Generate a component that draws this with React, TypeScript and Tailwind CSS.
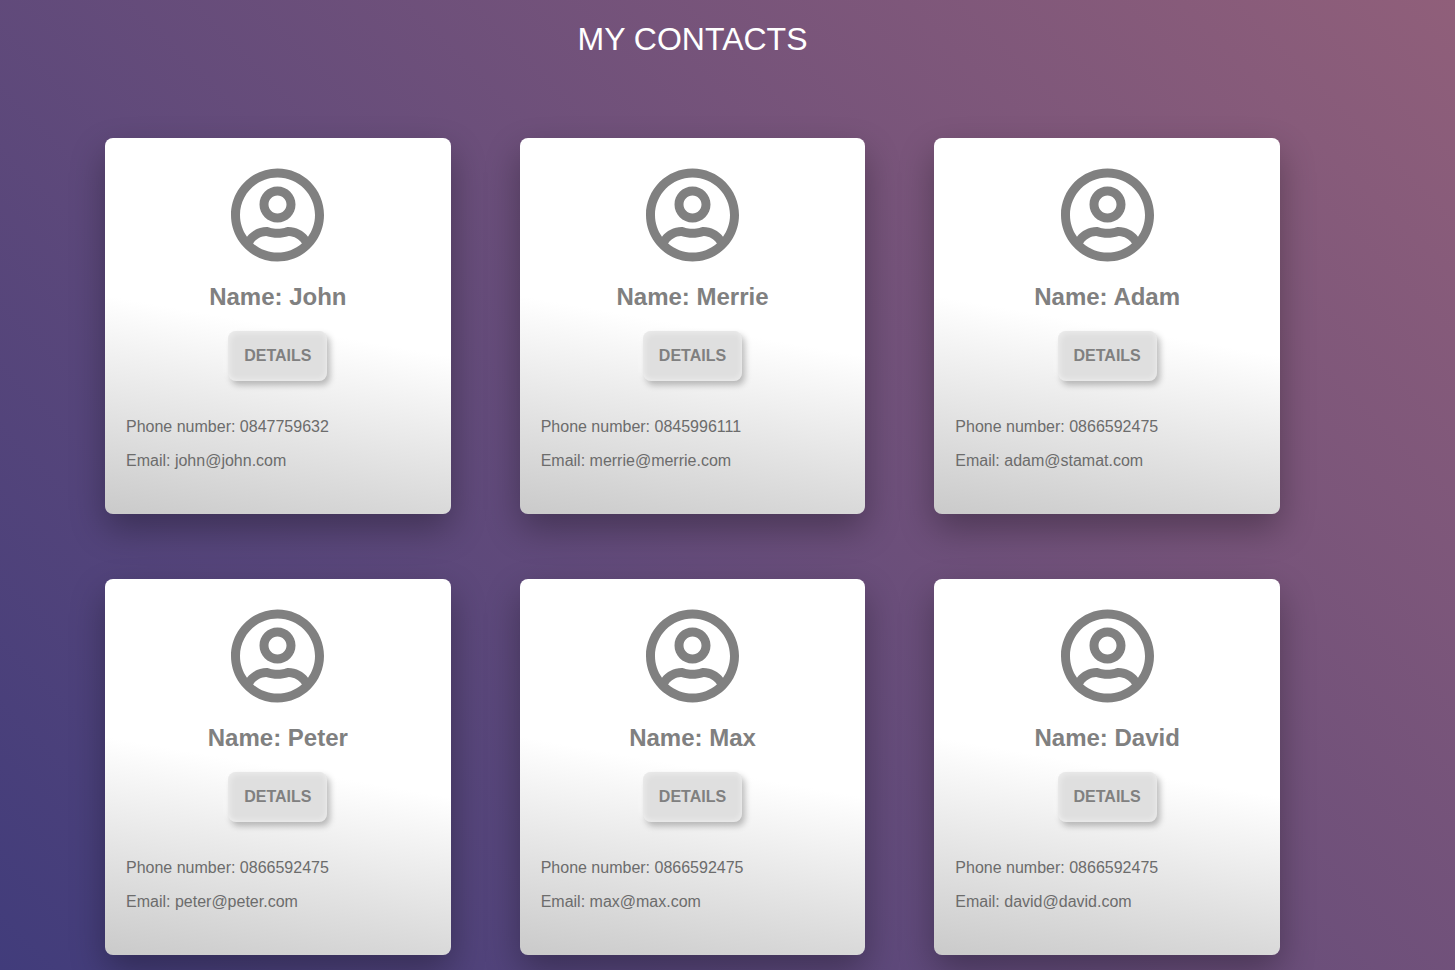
import { FaRegUserCircle } from "react-icons/fa";

type Contact = {
  name: string;
  phone: string;
  email: string;
};

const contacts: Contact[] = [
  { name: "John", phone: "0847759632", email: "john@john.com" },
  { name: "Merrie", phone: "0845996111", email: "merrie@merrie.com" },
  { name: "Adam", phone: "0866592475", email: "adam@stamat.com" },
  { name: "Peter", phone: "0866592475", email: "peter@peter.com" },
  { name: "Max", phone: "0866592475", email: "max@max.com" },
  { name: "David", phone: "0866592475", email: "david@david.com" },
];

function ContactCard({ name, phone, email }: Contact) {
  return (
    <article className="flex flex-col items-center rounded-lg bg-[linear-gradient(10deg,#cacaca,#ffffff_50%)] px-[21px] pt-[29px] pb-[41px] text-[#808080] shadow-[0_15px_35px_rgba(0,0,0,0.3)]">
      <FaRegUserCircle className="h-24 w-[93px]" aria-hidden="true" />
      <h2 className="mt-5 text-2xl leading-7 font-bold">Name: {name}</h2>
      <button
        type="button"
        className="mt-5 h-[50px] rounded-lg bg-[#dfdfdf] px-4 font-bold uppercase shadow-[inset_2px_2px_6px_rgba(255,255,255,0.4),inset_-2px_-3px_4px_rgba(255,255,255,0.25),3px_4px_6px_rgba(0,0,0,0.25),-2px_-2px_5px_rgba(255,255,255,0.6)]"
      >
        Details
      </button>
      <div className="mt-[34px] flex flex-col gap-2.5 self-stretch leading-6 text-[#6c6c6c]">
        <p>Phone number: {phone}</p>
        <p>Email: {email}</p>
      </div>
    </article>
  );
}

export default function App() {
  return (
    <main className="min-h-screen bg-[linear-gradient(45deg,#413c7b,#905f7a)] pb-4 font-['Liberation_Sans',Arial,sans-serif]">
      <h1 className="pt-[19px] pr-[70px] text-center text-[32px] leading-10 text-white">
        MY CONTACTS
      </h1>
      <section className="mt-[79px] grid grid-cols-3 gap-x-[69px] gap-y-[65px] pr-[175px] pl-[105px]">
        {contacts.map((contact) => (
          <ContactCard key={contact.name} {...contact} />
        ))}
      </section>
    </main>
  );
}
